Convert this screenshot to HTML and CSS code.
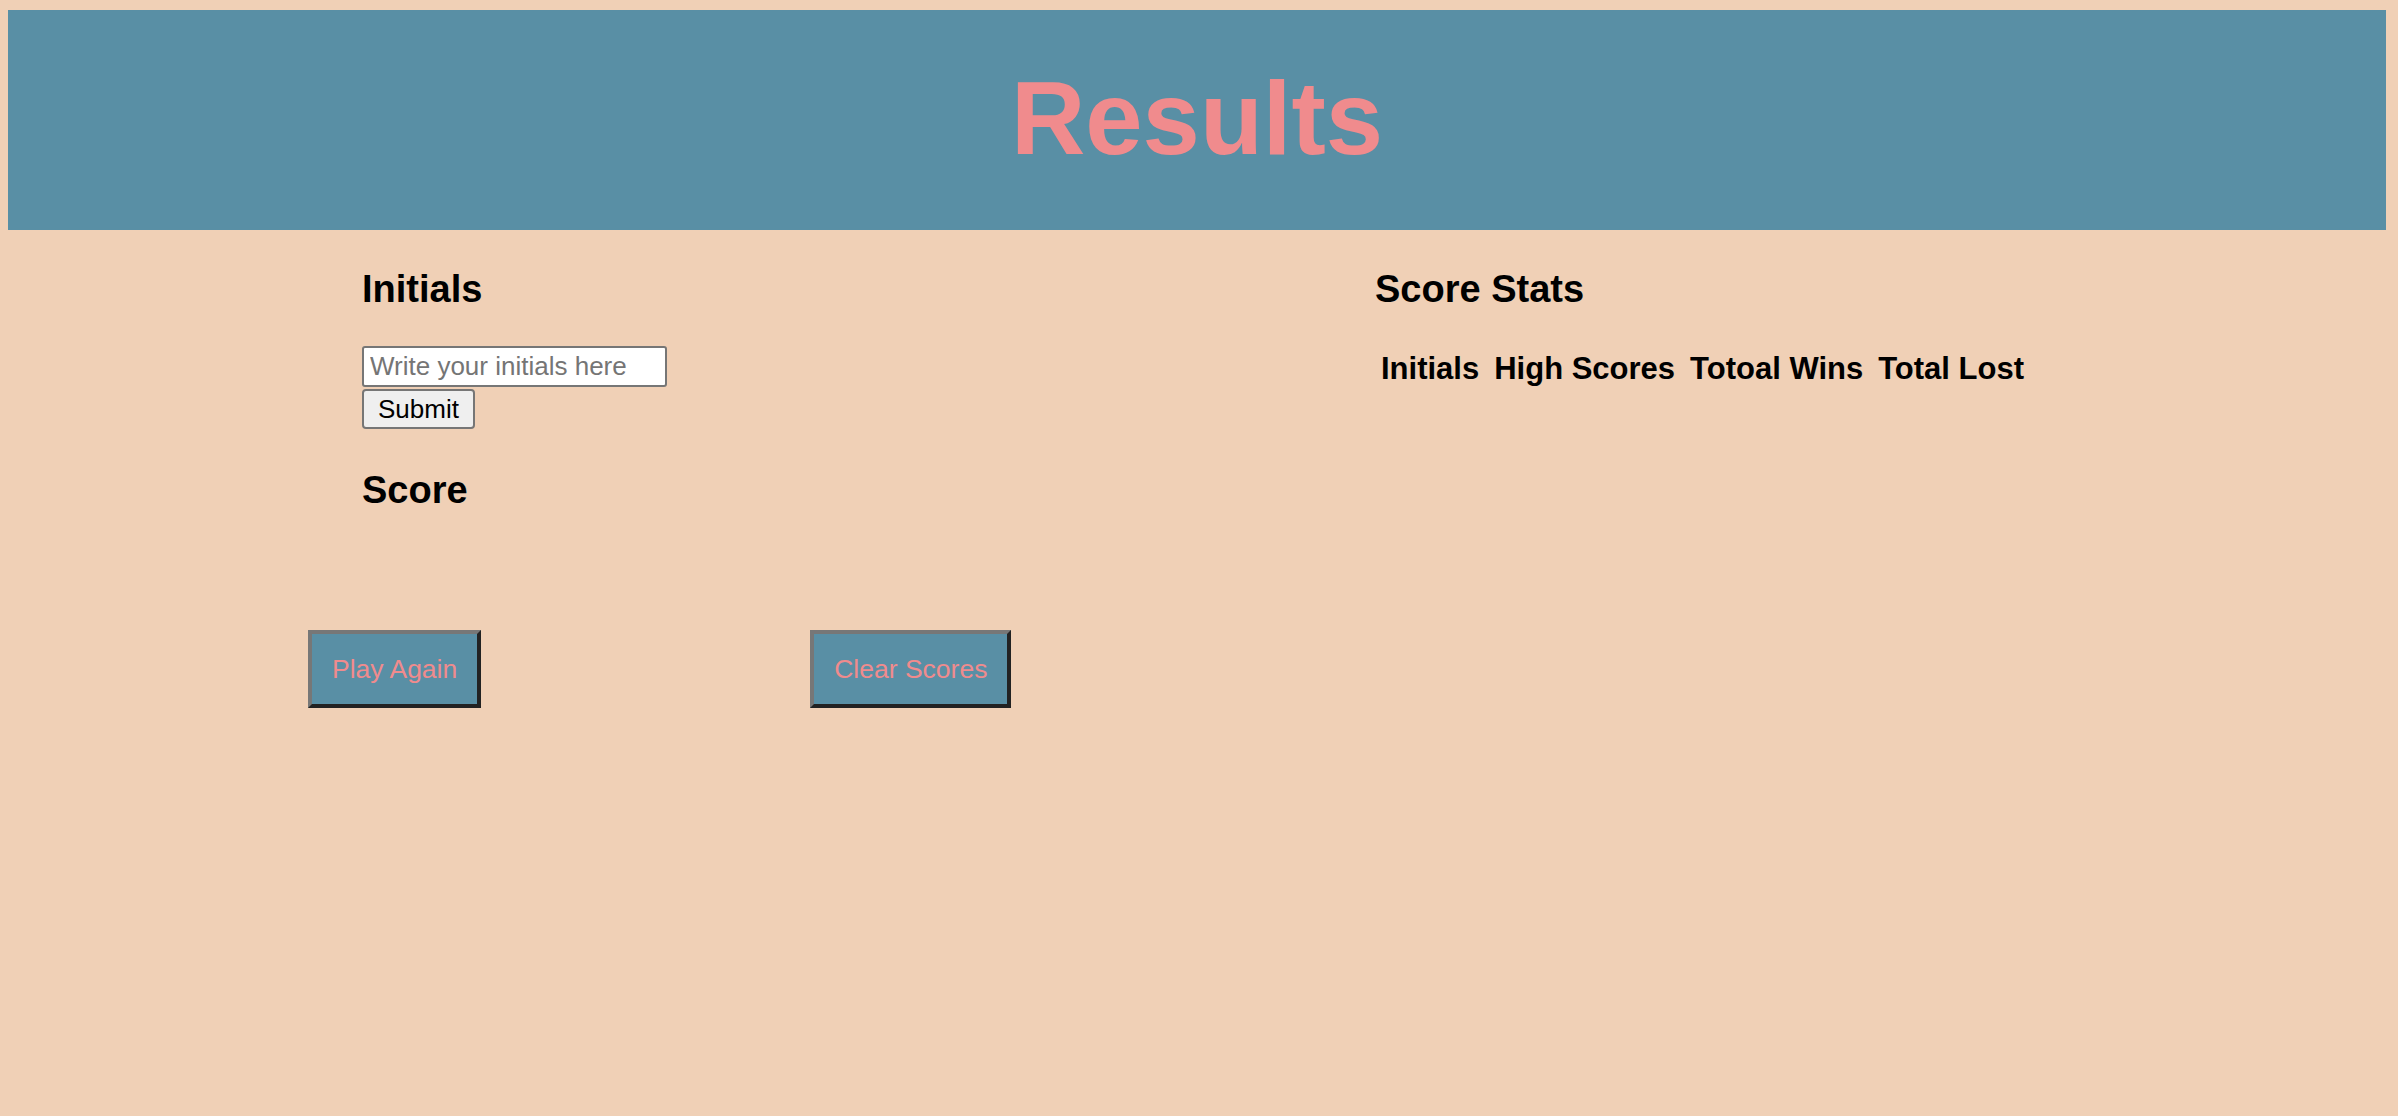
FILE: index.html
```html
<!DOCTYPE html>
<html lang="en">
<head>
<meta charset="utf-8">
<title>Results</title>
<link rel="stylesheet" href="styles.css">
</head>
<body>
<header class="banner">
  <h1 class="title">Results</h1>
</header>
<main class="content">
  <section class="left">
    <div class="entry">
      <h2 class="heading">Initials</h2>
      <form class="form">
        <input class="initials-input" type="text" placeholder="Write your initials here"><br>
        <button class="submit-btn" type="button">Submit</button>
      </form>
      <h2 class="heading score-heading">Score</h2>
    </div>
    <div class="actions">
      <button class="action-btn" type="button">Play Again</button>
      <button class="action-btn" type="button">Clear Scores</button>
    </div>
  </section>
  <section class="right">
    <h2 class="heading">Score Stats</h2>
    <table class="stats">
      <thead>
        <tr>
          <th>Initials</th>
          <th>High Scores</th>
          <th>Totoal Wins</th>
          <th>Total Lost</th>
        </tr>
      </thead>
    </table>
  </section>
</main>
</body>
</html>
```
FILE: styles.css
```css
html, body {
  background: #f0d0b6;
}
body {
  margin: 10px 12px 0 8px;
  font-family: "Liberation Sans", Arial, Helvetica, sans-serif;
  color: #000;
}
.banner {
  height: 220px;
  background: #598fa5;
  display: flex;
  align-items: center;
  justify-content: center;
}
.title {
  margin: 0 0 4px;
  font-size: 103px;
  font-weight: bold;
  color: #f08b8d;
  line-height: 1;
}
.content {
  display: grid;
  grid-template-columns: 1367px 1fr;
}
.left {
  padding-left: 300px;
}
.entry {
  padding-left: 54px;
}
.heading {
  margin: 37px 0 0;
  font-size: 38px;
  font-weight: bold;
  line-height: 44px;
}
.form {
  margin-top: 35px;
  line-height: 0;
}
.initials-input {
  box-sizing: border-box;
  width: 305px;
  height: 41px;
  margin: 0 0 2px;
  padding: 0 6px;
  border: 2px solid #767676;
  border-radius: 3px;
  background: #fff;
  font-family: inherit;
  font-size: 26px;
  color: #000;
}
.initials-input::placeholder {
  color: #757575;
}
.submit-btn {
  box-sizing: border-box;
  height: 40px;
  margin: 0;
  padding: 0 14px;
  border: 2px solid #767676;
  border-radius: 4px;
  background: #efefef;
  font-family: inherit;
  font-size: 26px;
  color: #000;
}
.score-heading {
  margin-top: 39px;
}
.actions {
  display: flex;
  gap: 329px;
  margin-top: 118px;
}
.action-btn {
  box-sizing: border-box;
  height: 78px;
  padding: 0 20px;
  border-style: solid;
  border-width: 4px;
  border-color: #777 #222 #222 #777;
  background: #598fa5;
  color: #f08b8d;
  font-family: inherit;
  font-size: 26.5px;
}
.stats {
  margin-top: 40px;
  margin-left: 6px;
  border-spacing: 0;
}
.stats th {
  padding: 0 15px 0 0;
  font-size: 31px;
  line-height: 36px;
  font-weight: bold;
  text-align: left;
}
.stats th:last-child {
  padding-right: 0;
}
```
